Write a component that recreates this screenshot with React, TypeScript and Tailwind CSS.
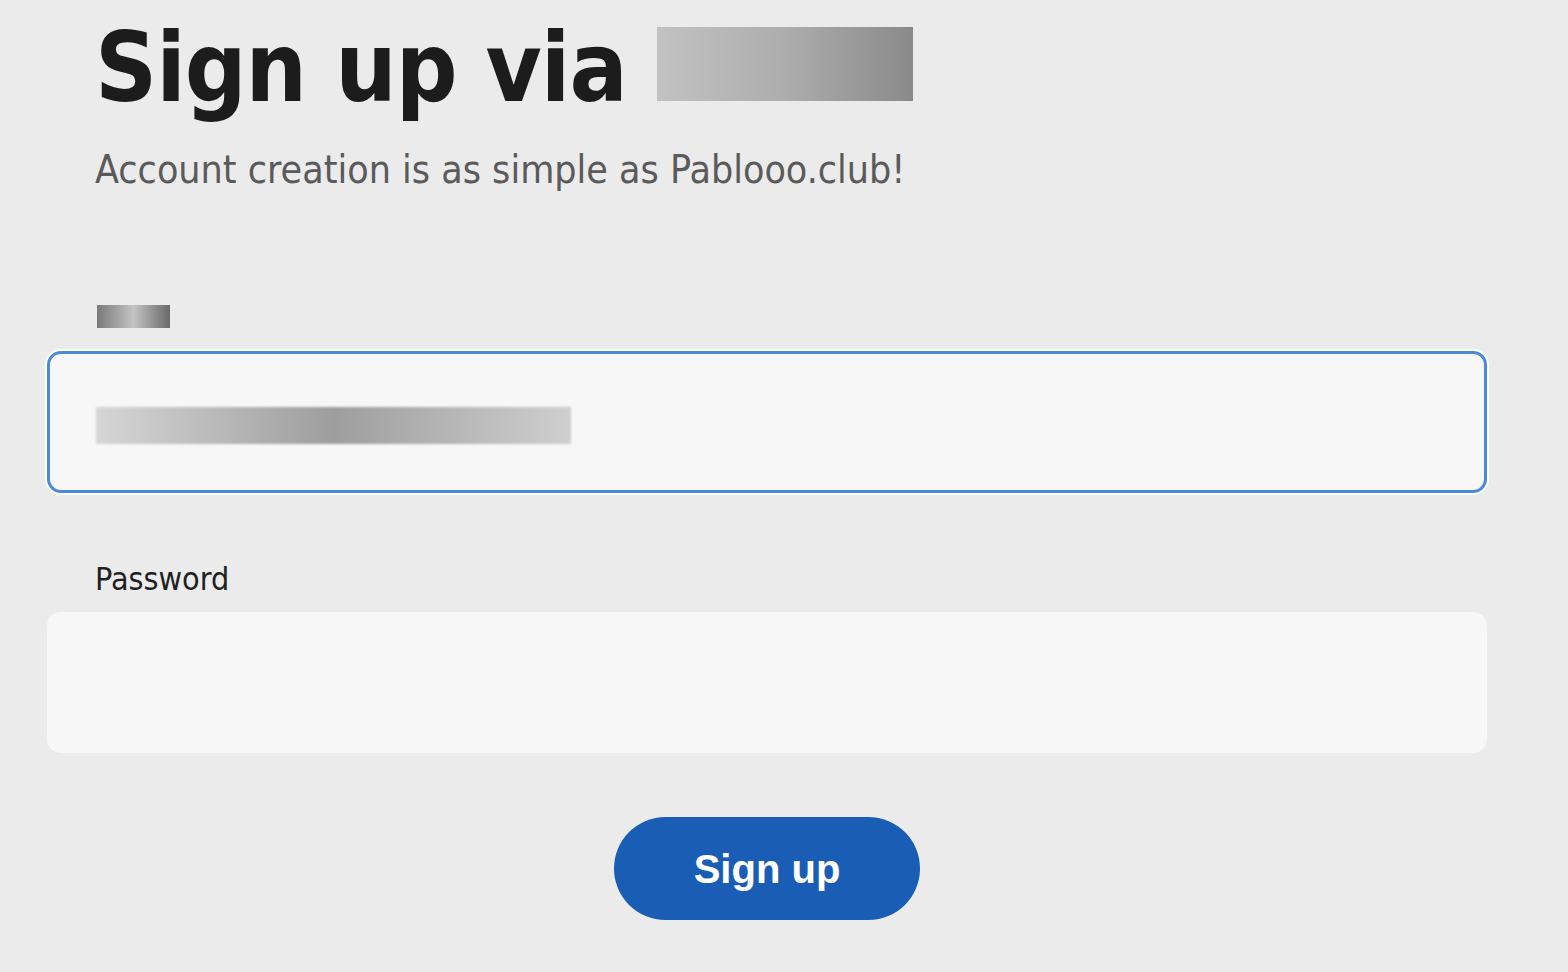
export default function App() {
  return (
    <div className="min-h-[972px] w-full bg-[#ebebeb] overflow-hidden">
      <div className="pl-[47px] pr-[81px] pt-[20px]">
        <div className="pl-[48px]">
          <h1
            className="flex items-center gap-[30px] text-[96px] leading-none font-bold text-[#1c1c1c]"
            style={{ fontFamily: '"DejaVu Sans Condensed", "DejaVu Sans", sans-serif' }}
          >
            <span className="tracking-[-1px]">Sign up via</span>
            <span className="-mt-[8px] inline-block h-[74px] w-[256px] bg-gradient-to-r from-[#c2c2c2] via-[#adadad] to-[#8a8a8a]" />
          </h1>
          <p
            className="mt-[34px] text-[39px] leading-none text-[#5a5a5a]"
            style={{ fontFamily: '"DejaVu Sans Condensed", "DejaVu Sans", sans-serif' }}
          >
            Account creation is as simple as Pablooo.club!
          </p>
        </div>

        <div className="mt-[116px] pl-[50px]">
          <div className="h-[23px] w-[73px] bg-gradient-to-r from-[#7a7a7a] via-[#c4c4c4] to-[#6a6a6a]" />
        </div>
        <div className="mt-[23px] flex h-[142px] items-center rounded-[14px] border-[3px] border-[#4a8ad8] bg-[#f7f7f7] pl-[46px] pt-[6px] ring-2 ring-white">
          <div className="h-[37px] w-[475px] bg-gradient-to-r from-[#d6d6d6] via-[#9e9e9e] to-[#cfcfcf] blur-[1px]" />
        </div>

        <div className="mt-[70px] pl-[48px]">
          <label
            className="block text-[32px] leading-none text-[#1f1f1f]"
            style={{ fontFamily: '"DejaVu Sans Condensed", "DejaVu Sans", sans-serif' }}
          >
            Password
          </label>
        </div>
        <div className="mt-[17px] h-[141px] rounded-[14px] bg-[#f7f7f7]" />

        <div className="mt-[64px] flex justify-center">
          <button
            className="h-[103px] w-[306px] rounded-full bg-[#1a5db4] text-[40px] font-bold text-white"
            style={{ fontFamily: '"Liberation Sans", Arial, sans-serif' }}
          >
            Sign up
          </button>
        </div>
      </div>
    </div>
  );
}
